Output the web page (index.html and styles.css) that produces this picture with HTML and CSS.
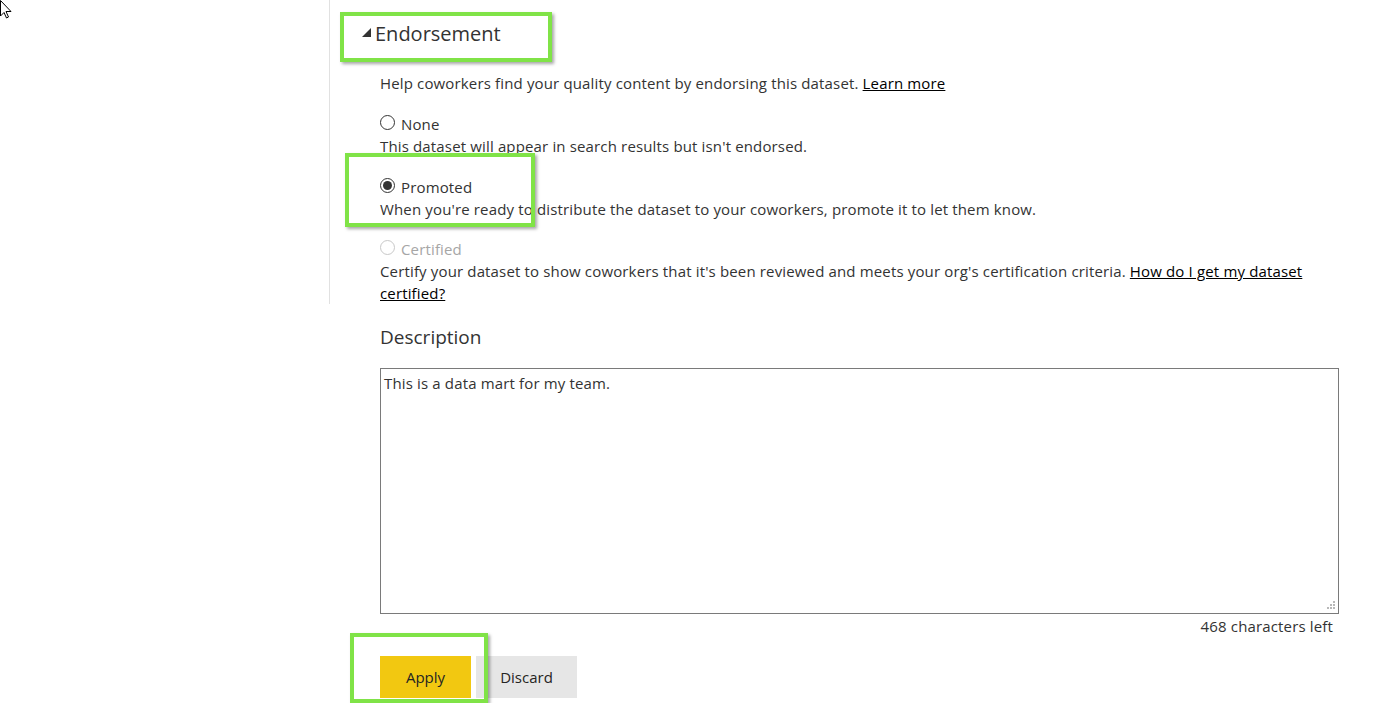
FILE: index.html
```html
<!DOCTYPE html>
<html>
<head>
<meta charset="utf-8">
<link rel="stylesheet" href="styles.css">
</head>
<body>
<svg class="cursor" width="12" height="19" viewBox="0 0 12 19"><path d="M0.5 0.5 L0.5 16 L4 12.5 L6.5 18 L8.5 17 L6 11.5 L11 11.5 Z" fill="#fff" stroke="#000" stroke-width="1"/></svg>
<main class="page">
  <section class="endorse">
    <h2 class="sec-head"><svg class="tri" width="9" height="9" viewBox="0 0 9 9"><polygon points="9,0 9,9 0,9" fill="#333"/></svg>Endorsement</h2>
    <p class="help">Help coworkers find your quality content by endorsing this dataset. <a href="#">Learn more</a></p>
    <div class="opt">
      <div class="opt-row"><span class="radio"></span>None</div>
      <p class="opt-desc">This dataset will appear in search results but isn't endorsed.</p>
    </div>
    <div class="opt">
      <div class="opt-row"><span class="radio checked"></span>Promoted</div>
      <p class="opt-desc">When you're ready to distribute the dataset to your coworkers, promote it to let them know.</p>
    </div>
    <div class="opt">
      <div class="opt-row disabled"><span class="radio"></span>Certified</div>
      <p class="opt-desc">Certify your dataset to show coworkers that it's been reviewed and meets your org's certification criteria. <a href="#">How do I get my dataset certified?</a></p>
    </div>
  </section>
  <section class="desc">
    <h2 class="desc-head">Description</h2>
    <div class="box-wrap">
      <textarea class="desc-box">This is a data mart for my team.</textarea>
      <svg class="grip" width="10" height="10" viewBox="0 0 10 10" fill="#b8b8b8"><rect x="7" y="0" width="2" height="2"/><rect x="4" y="3" width="2" height="2"/><rect x="7" y="3" width="2" height="2"/><rect x="1" y="6" width="2" height="2"/><rect x="4" y="6" width="2" height="2"/><rect x="7" y="6" width="2" height="2"/></svg>
    </div>
    <div class="counter">468 characters left</div>
    <div class="buttons">
      <button class="btn apply">Apply</button>
      <button class="btn discard">Discard</button>
    </div>
  </section>
  <div class="hl hl-1"></div>
  <div class="hl hl-2"></div>
  <div class="hl hl-3"></div>
</main>
</body>
</html>
```
FILE: styles.css
```css
html, body {
  margin: 0;
  padding: 0;
  background: #fff;
  overflow: hidden;
}
body {
  font-family: "Open Sans", "Noto Sans", sans-serif;
  font-size: 15px;
  letter-spacing: 0.15px;
  color: #333;
  height: 703px;
}
.cursor {
  position: absolute;
  left: 0;
  top: 0;
  z-index: 10;
}
.page {
  position: relative;
  padding-left: 329px;
}
.endorse {
  border-left: 1px solid #e1e1e1;
  padding: 20px 0 0 50px;
  height: 284px;
}
.sec-head {
  margin: 0 0 0 -18px;
  font-size: 20px;
  font-weight: 400;
  letter-spacing: 0;
  line-height: 28px;
  height: 28px;
  display: flex;
  align-items: center;
  gap: 4px;
  color: #333;
}
.tri { margin-top: -4px; }
.help {
  margin: 24px 0 0;
  line-height: 22px;
}
a { color: #000; text-decoration: underline; }
.opt { margin-top: 19px; width: 959px; }
.opt:last-child { margin-top: 18px; }
.opt-row {
  display: flex;
  align-items: center;
  gap: 6px;
  line-height: 22px;
}
.opt-desc {
  margin: 0;
  line-height: 22px;
}
.radio {
  width: 13px;
  height: 13px;
  border: 1px solid #333;
  border-radius: 50%;
  display: inline-flex;
  align-items: center;
  justify-content: center;
  margin-top: -3px;
}
.radio.checked::after {
  content: "";
  width: 9px;
  height: 9px;
  border-radius: 50%;
  background: #333;
}
.disabled { color: #a6a6a6; }
.disabled .radio { border-color: #c8c8c8; }
.desc {
  padding: 19px 61px 0 51px;
}
.desc-head {
  margin: 0;
  font-size: 19px;
  font-weight: 400;
  letter-spacing: 0;
  line-height: 28px;
  color: #333;
}
.box-wrap {
  position: relative;
  width: 959px;
  margin-top: 17px;
}
.desc-box {
  display: block;
  box-sizing: border-box;
  width: 959px;
  height: 246px;
  margin: 0;
  border: 1px solid #7a7a7a;
  padding: 3px 3px;
  font: inherit;
  letter-spacing: inherit;
  line-height: 22px;
  color: #333;
  resize: none;
  outline: none;
}
.grip {
  position: absolute;
  right: 3px;
  bottom: 3px;
}
.counter {
  width: 959px;
  box-sizing: border-box;
  text-align: right;
  padding-right: 6px;
  line-height: 24px;
}
.buttons {
  display: flex;
  gap: 5px;
  margin-top: 18px;
}
.btn {
  border: none;
  height: 42px;
  font: inherit;
  font-size: 15px;
  letter-spacing: 0;
  color: #252423;
  padding: 0;
}
.apply { width: 91px; background: #f2c811; }
.discard { width: 101px; background: #e6e6e6; }
.hl {
  position: absolute;
  border: 4px solid #80e347;
  box-shadow: 2px 2px 3px rgba(0,0,0,0.35);
  pointer-events: none;
}
.hl-1 { left: 340px; top: 12px; width: 204px; height: 42px; }
.hl-2 { left: 345px; top: 153px; width: 182px; height: 66px; }
.hl-3 { left: 350px; top: 633px; width: 130px; height: 62px; }
```
